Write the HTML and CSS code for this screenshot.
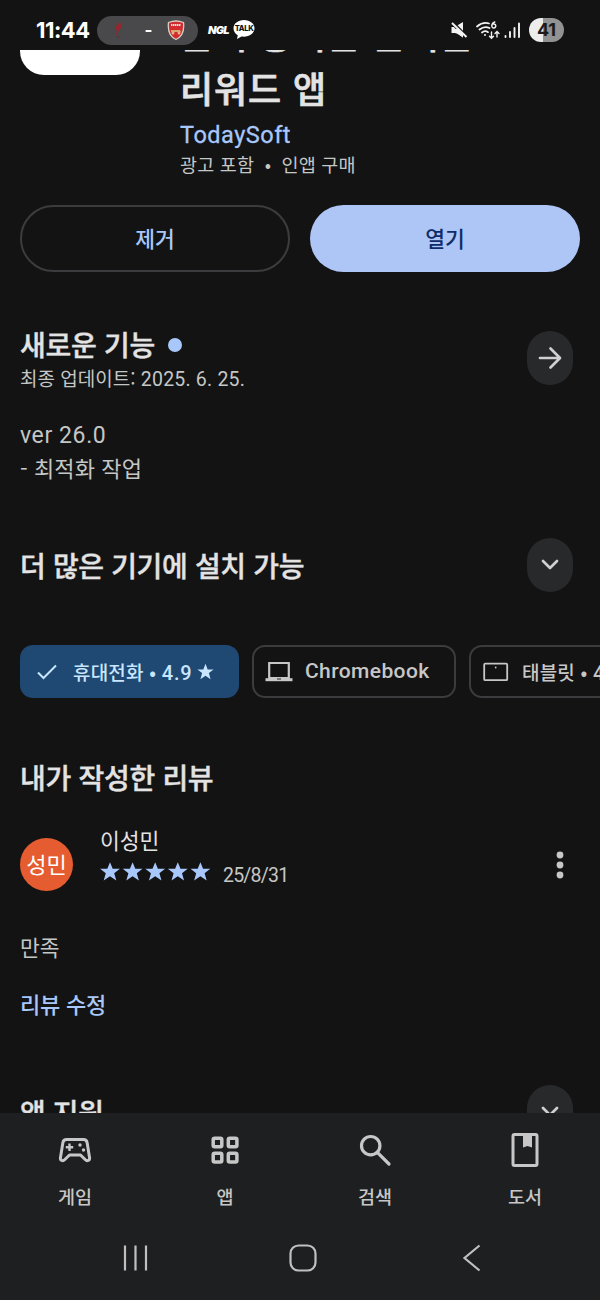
FILE: index.html
```html
<!DOCTYPE html>
<html lang="ko">
<head>
<meta charset="utf-8">
<title>리워드 앱</title>
<link rel="stylesheet" href="styles.css">
</head>
<body>
<div class="phone">
  <header class="status">
    <span class="clock">11:44</span>
    <div class="score">
      <svg class="bird" width="12" height="17" viewBox="0 0 12 17"><path d="M5 1l4 1-2 2 2 0-2 3-2 3 0 3h-2l1-4-2-3 2-3z" fill="#98242d"/><path d="M4 14l3 1-3 1z" fill="#74252d"/></svg>
      <span class="dash">-</span>
      <svg width="18" height="21" viewBox="0 0 18 21"><path d="M1.5 2.5Q9-.5 16.5 2.5c.8 7-.4 14-7.5 17C1.900 16.500.7 9.500 1.500 2.500z" fill="#d22a2e" stroke="#d7cfc5" stroke-width="1.300"/><path d="M4 5h10" stroke="#f3dcd7" stroke-width="1.800" stroke-dasharray="1.500 .5"/><path d="M4 10h9l1 2H4z" fill="#d5a66d"/><circle cx="6" cy="13" r="1.500" fill="#e4b586"/><circle cx="12" cy="13" r="1.500" fill="#e4b586"/></svg>
    </div>
    <span class="ngl">NGL</span>
    <div class="talk"><svg width="22" height="20" viewBox="0 0 22 20"><path d="M11 0C4.900 0 .5 3.600.5 8.300c0 3 1.700 5.500 4.300 6.900L4 19l4.500-2.500c7.200 1 13-2.900 13-8.200C21.500 3.600 17.100 0 11 0z" fill="#fff"/></svg><span>TALK</span></div>
    <div class="signals">
      <svg width="18" height="18" viewBox="0 0 18 18"><path d="M1.500 6H5l3-2 5-3v15.500l-5-3.500-3-1H1.500z" fill="#f2f2f2"/><path d="M0 -.5l18 18" stroke="#131314" stroke-width="4"/><path d="M2 2l14.500 14" stroke="#f2f2f2" stroke-width="2"/><path d="M2 8l6 5 5 3.500V13L8 8z" fill="#f2f2f2"/></svg>
      <svg class="wifi" width="24" height="19" viewBox="0 0 24 19" fill="none" stroke="#f2f2f2" stroke-width="1.700" stroke-linecap="round"><path d="M1 5.500Q7 .5 13 2.500M3.500 8.500Q8.500 4.500 13.500 7M6 11.500Q9 9 12 11.200"/><circle cx="9" cy="14" r="1" fill="#f2f2f2" stroke="none"/><path d="M18.800 1Q15.800 2 15.800 5a2 2 0 1 0 1.700-2" stroke-width="1.400"/><path d="M15.500 11v6M13.500 15.200l2 2 2-2M21 16v-5.500M19 12.500l2-2 2 2" stroke-width="1.400"/></svg>
      <svg class="bars" width="17" height="17" viewBox="0 0 17 17" stroke="#f2f2f2" stroke-width="1.900" stroke-linecap="round"><path d="M1.500 14v1M6 10v5M10.500 6v9M15 1.500v13.500"/></svg>
      <span class="battery">41</span>
    </div>
  </header>

  <main class="content">
    <section class="app">
      <div class="app-icon"></div>
      <div class="app-info">
        <h1>돈 주용이는 든이는<br>리워드 앱</h1>
        <p class="developer">TodaySoft</p>
        <p class="notice">광고 포함 <span class="mid">•</span> 인앱 구매</p>
      </div>
    </section>
    <div class="actions">
      <button class="btn">제거</button>
      <button class="btn filled">열기</button>
    </div>
    <section class="row news">
      <div>
        <h2>새로운 기능<i class="dot"></i></h2>
        <p class="updated">최종 업데이트: <span class="lat">2025. 6. 25.</span></p>
      </div>
      <span class="round"><svg width="24" height="24" viewBox="0 0 24 24"><path d="M2 12h19.500M12.500 2.500l9.500 9.500-9.500 9.500"/></svg></span>
    </section>
    <div class="changes"><p class="version">ver 26.0</p><p>- 최적화 작업</p></div>
    <section class="row devices">
      <h2>더 많은 기기에 설치 가능</h2>
      <span class="round"><svg width="18" height="12" viewBox="0 0 18 12"><path d="M2 2l7 7 7-7"/></svg></span>
    </section>
    <div class="chips">
      <div class="chip selected">
        <svg width="20" height="16" viewBox="0 0 20 16"><path d="M1 8.500l5.500 5.500L19 1.500" fill="none" stroke="#c8e6ff" stroke-width="2"/></svg>
        <span class="label">휴대전화 • <span class="lat">4.9</span></span>
        <svg class="star" width="17" height="17" viewBox="1.500 1.500 21 20"><path d="M12 2l2.700 7h7.300l-5.800 4.500 2.100 7.500L12 16.700 5.700 21l2.100-7.500L2 9h7.300z" fill="#c8e6ff"/></svg>
      </div>
      <div class="chip laptop">
        <svg width="28" height="22" viewBox="0 0 28 22"><path d="M4.200 2h19.600v15H4.200z" fill="none" stroke="#c7c7c7" stroke-width="2.200"/><path d="M.5 17.200h27v3H.5z" fill="#c7c7c7"/><path d="M12 18h4" stroke="#444" stroke-width="1.200"/></svg>
        <span class="label lat">Chromebook</span>
      </div>
      <div class="chip tablet">
        <svg width="26" height="20" viewBox="0 0 26 20"><rect x="1.200" y="1.700" width="23" height="16.500" rx="1" fill="none" stroke="#c7c7c7" stroke-width="1.800"/><circle cx="12.700" cy="5.500" r=".9" fill="#c7c7c7"/></svg>
        <span class="label">태블릿 • <span class="lat">4.4</span></span>
      </div>
    </div>
    <h2 class="my-title">내가 작성한 리뷰</h2>
    <section class="reviewer">
      <div class="avatar">성민</div>
      <div class="who">
        <p class="name">이성민</p>
        <div class="rating">
          <svg width="111" height="20" viewBox="0 0 111 20" fill="#a8c7fa"><defs><path id="s" d="M10 .2l2.700 6.600h7.200L14.200 11.200l2.100 7.300L10 14.200l-6.300 4.300 2.100-7.300L.1 6.800h7.200z"/></defs><use href="#s"/><use href="#s" x="22.600"/><use href="#s" x="45.200"/><use href="#s" x="67.800"/><use href="#s" x="90.400"/></svg>
          <span class="date">25/8/31</span>
        </div>
      </div>
      <svg class="more" width="8" height="28" viewBox="0 0 8 28" fill="#c7c7c7"><circle cx="4" cy="4" r="3.400"/><circle cx="4" cy="14" r="3.400"/><circle cx="4" cy="24" r="3.400"/></svg>
    </section>
    <p class="review">만족</p>
    <p class="edit">리뷰 수정</p>
    <section class="row support">
      <h2>앱 지원</h2>
      <span class="round"><svg width="18" height="12" viewBox="0 0 18 12"><path d="M2 2l7 7 7-7"/></svg></span>
    </section>
  </main>

  <nav class="tabs">
    <div class="tab"><svg width="36" height="36" viewBox="0 0 36 36" fill="none" stroke="#c7c7c7" stroke-width="3" stroke-linejoin="round"><path d="M9.500 7.500h17q3 0 3.600 3l2.500 15.500c.3 2.500-2.500 3.500-4.200 1.800L23.500 23h-11l-4.900 4.800C5.900 29.500 3.100 28.500 3.400 26L5.900 10.500Q6.500 7.500 9.500 7.500z"/><path d="M12.500 11.500v7.400M8.800 15.200h7.400" stroke-width="2.400"/><g fill="#c7c7c7" stroke="none"><circle cx="23" cy="13" r="1.700"/><circle cx="26.500" cy="18" r="1.700"/></g></svg><span>게임</span></div>
    <div class="tab"><svg width="36" height="36" viewBox="0 0 36 36" fill="none" stroke="#c7c7c7" stroke-width="3.500"><rect x="6.200" y="6.200" width="8.600" height="8.600" rx="1.500"/><rect x="21.300" y="6.200" width="8.600" height="8.600" rx="1.500"/><rect x="6.200" y="21.300" width="8.600" height="8.600" rx="1.500"/><rect x="21.300" y="21.300" width="8.600" height="8.600" rx="1.500"/></svg><span>앱</span></div>
    <div class="tab"><svg width="36" height="36" viewBox="0 0 36 36" fill="none" stroke="#c7c7c7" stroke-width="3.200" stroke-linecap="round"><circle cx="13.700" cy="13.700" r="9.200"/><path d="M20.800 20.800L32 32"/></svg><span>검색</span></div>
    <div class="tab"><svg width="36" height="36" viewBox="0 0 36 36"><rect x="6" y="2.500" width="24" height="31" rx="1.500" fill="none" stroke="#c7c7c7" stroke-width="3"/><path d="M16 2h9v13.500L20.500 14 16 15.500z" fill="#c7c7c7"/></svg><span>도서</span></div>
  </nav>
  <footer class="system">
    <svg width="26" height="28" viewBox="0 0 26 28" stroke="#c0c0c0" stroke-width="2.200"><path d="M3 1.500v25M13.500 1.500v25M24 1.500v25"/></svg>
    <svg width="28" height="28" viewBox="0 0 28 28"><rect x="1.500" y="1.500" width="25" height="25" rx="8" fill="none" stroke="#c0c0c0" stroke-width="2.200"/></svg>
    <svg width="20" height="28" viewBox="0 0 20 28"><path d="M17.500 1.500L2.500 14l15 12.500" fill="none" stroke="#c0c0c0" stroke-width="2.200"/></svg>
  </footer>
</div>
</body>
</html>
```

FILE: styles.css
```css
* { box-sizing: border-box; margin: 0; padding: 0; }
body { background: #131314; font-family: "Noto Sans CJK KR", sans-serif; color: #e3e3e3; }
svg { display: block; flex: none; }
.phone { width: 600px; height: 1300px; display: flex; flex-direction: column; overflow: hidden; }
.lat { font-family: Roboto, "Noto Sans CJK KR", sans-serif; }

.status { height: 50px; flex: none; display: flex; align-items: center; padding: 10px 36px 0; color: #fff; }
.clock { font: 700 22px/30px Inter, sans-serif; letter-spacing: -.5px; width: 61px; white-space: nowrap; }
.score { width: 101px; height: 29px; border-radius: 15px; background: #49494b; display: flex; align-items: center; justify-content: space-between; padding: 0 13px 0 16px; }
.dash { font: 700 17px/20px Inter, sans-serif; padding-left: 5px; }
.ngl { font: italic 900 11px/14px Inter, sans-serif; margin-left: 10px; width: 25px; letter-spacing: -.7px; }
.talk { position: relative; width: 22px; height: 20px; }
.talk span { position: absolute; inset: 0; color: #131314; font: 800 7.500px/17px Inter, sans-serif; letter-spacing: -.3px; text-align: center; }
.signals { display: flex; align-items: center; margin-left: auto; }
.wifi { margin-left: 8px; }
.bars { margin-left: 4px; }
.battery { width: 35px; height: 24px; margin-left: 8px; border-radius: 12px; background: linear-gradient(90deg, #ededed 41%, #929292 41%); color: #1b1b1b; font: 700 18px/24px Inter, sans-serif; text-align: center; }

.content { height: 1063px; flex: none; overflow: hidden; padding-left: 20px; }
.app { display: flex; gap: 40px; height: 155px; }
.app-icon { width: 120px; height: 25px; background: #fff; border-radius: 0 0 24px 24px; }
.app-info { margin-top: -44px; white-space: nowrap; }
h1 { font-size: 36px; line-height: 54px; font-weight: 500; letter-spacing: .9px; -webkit-text-stroke: .7px #e3e3e3; }
.developer { font: 400 23.500px/34px Roboto, sans-serif; letter-spacing: .5px; color: #a8c7fa; margin-top: 4px; -webkit-text-stroke: .3px #a8c7fa; }
.notice { font-size: 18.500px; line-height: 28px; color: #c4c7c5; margin-top: -2px; letter-spacing: .2px; }
.mid { margin: 0 5px; }
.actions { display: flex; gap: 20px; }
.btn { width: 270px; height: 67px; border-radius: 34px; border: 2px solid #3c3c3e; background: none; color: #a8c7fa; font: 500 21.500px "Noto Sans CJK KR", sans-serif; padding-bottom: 3px; }
.btn.filled { background: #aec6f6; border: 0; color: #102c68; }
.row { display: flex; justify-content: space-between; align-items: center; padding-right: 27px; }
h2 { font-size: 28px; line-height: 38px; font-weight: 500; white-space: nowrap; letter-spacing: -.3px; -webkit-text-stroke: .4px #e3e3e3; }
.news { height: 76px; margin-top: 48px; }
.news > div { padding-top: 4px; }
.dot { display: inline-block; width: 14px; height: 14px; border-radius: 50%; background: #a8c7fa; margin-left: 13px; vertical-align: 4px; }
.updated { font-size: 19px; line-height: 30px; color: #c4c7c5; }
.updated .lat { font-size: 19.500px; letter-spacing: .2px; }
.round { width: 46px; height: 54px; border-radius: 23px; background: #28292b; display: flex; align-items: center; justify-content: center; }
.round path { fill: none; stroke: #d0d0d0; stroke-width: 2.700; stroke-linecap: round; stroke-linejoin: round; }
.changes { margin-top: 23px; height: 67px; font-size: 22px; line-height: 29px; color: #c4c7c5; letter-spacing: .1px; }
.version { font: 400 23px/34px Roboto, sans-serif; letter-spacing: .6px; }
.devices { height: 54px; margin-top: 52px; }
.devices h2 { padding-bottom: 1px; letter-spacing: -.35px; }
.chips { display: flex; gap: 13px; margin-top: 53px; overflow: hidden; }
.chip { height: 53px; flex: none; border: 2px solid #3c3c3e; border-radius: 13px; display: flex; align-items: center; color: #c7c7c7; font-size: 19px; font-weight: 500; white-space: nowrap; }
.chip .label { padding-bottom: 1px; }
.chip.selected { width: 219px; background: #1f4972; border: 0; color: #c8e6ff; padding-left: 17px; }
.selected .label { margin-left: 16px; letter-spacing: .2px; }
.selected .lat { font-size: 20px; letter-spacing: .8px; }
.star { margin-left: 5px; }
.laptop { width: 204px; padding-left: 11px; }
.laptop .label { margin-left: 12px; font-size: 21px; letter-spacing: .4px; }
.tablet { width: 204px; padding-left: 12px; }
.tablet .label { margin-left: 13px; letter-spacing: .2px; }
.tablet .lat { font-size: 20px; }
.my-title { margin-top: 60px; }
.reviewer { display: flex; margin-top: 27px; height: 74px; align-items: center; padding-right: 36px; }
.avatar { width: 53px; height: 53px; border-radius: 50%; background: #e45c30; color: #fff; font-size: 22px; line-height: 50px; text-align: center; margin-top: 9px; }
.who { margin-left: 27px; height: 74px; }
.name { font-size: 21.500px; line-height: 33px; color: #e3e3e3; }
.rating { display: flex; gap: 12px; align-items: center; height: 32px; }
.date { font: 400 19.500px/28px Roboto, sans-serif; letter-spacing: -.8px; color: #c4c7c5; padding-top: 7px; }
.more { margin: 10px 0 0 auto; }
.review { margin-top: 34px; font-size: 21.500px; line-height: 32px; color: #c4c7c5; }
.edit { margin-top: 24px; font-size: 22px; line-height: 32px; font-weight: 500; letter-spacing: -.2px; color: #a8c7fa; }
.support { height: 54px; margin-top: 66px; }
.support h2 { letter-spacing: -.4px; }

.tabs { height: 105px; flex: none; display: flex; background: #1e1f20; padding-top: 19px; }
.tab { width: 150px; display: flex; flex-direction: column; align-items: center; gap: 13px; color: #c7c7c7; font-size: 18.500px; line-height: 30px; font-weight: 500; }
.system { flex: 1; display: flex; background: #1e1f20; padding: 26px 118px 0 122px; align-items: flex-start; }
.system svg:nth-child(2) { margin-left: 141px; }
.system svg:nth-child(3) { margin-left: auto; }
```
